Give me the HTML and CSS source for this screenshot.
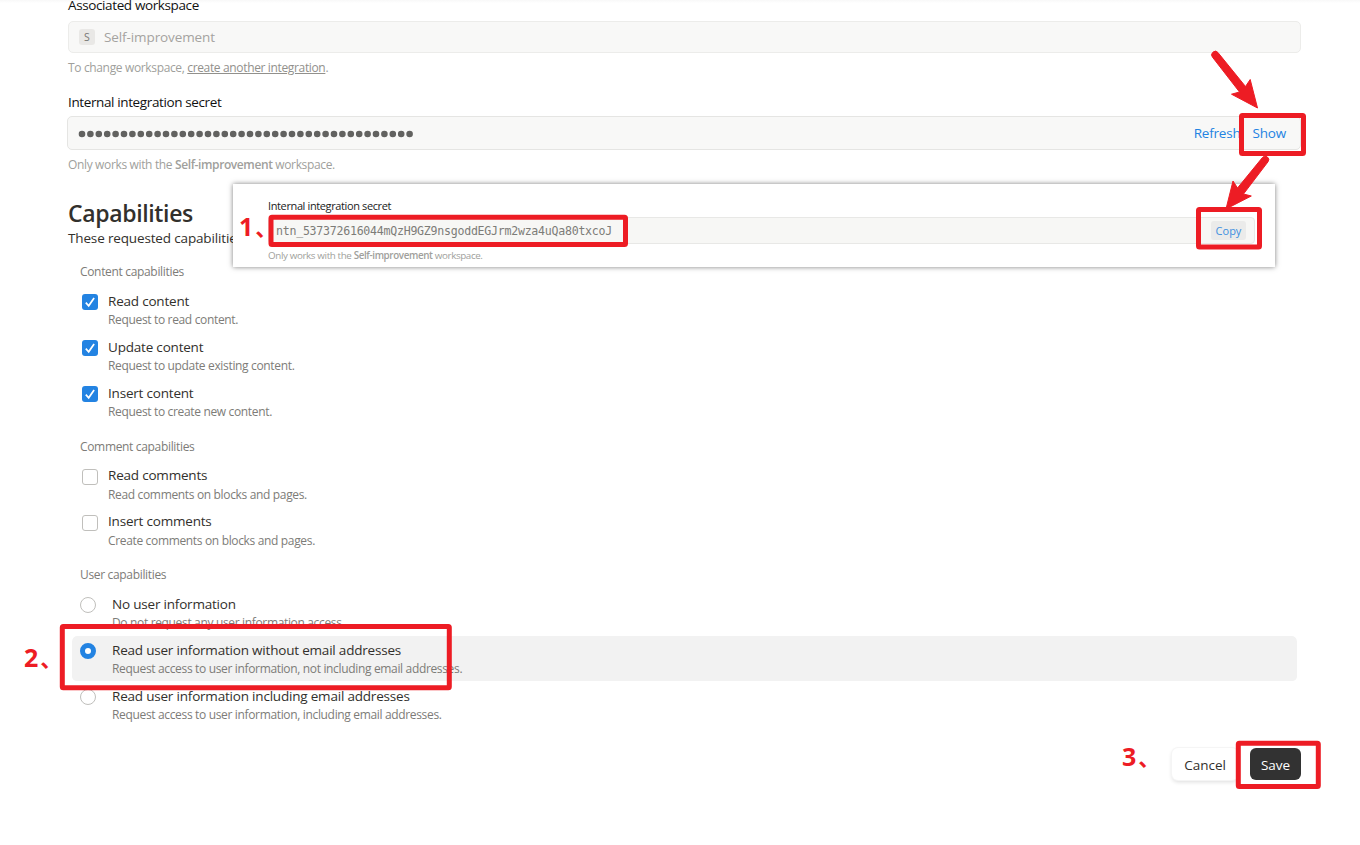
FILE: index.html
```
<!DOCTYPE html>
<html lang="en">
<head>
    <meta charset="utf-8">
    <title>Integration settings</title>
    <link rel="stylesheet" href="styles.css">
</head>
<body>
    <div class="container">
        <div class="label">Associated workspace</div>
        <div class="field workspace">
            <span class="avatar">S</span>
            <span class="workspace-name">Self-improvement</span>
        </div>
        <div class="hint hint-workspace">To change workspace, <a href="#">create another integration</a>.</div>

        <div class="label label-secret">Internal integration secret</div>
        <div class="field secret">
            <svg class="dots" width="336" height="8">
                <line x1="4" y1="4" x2="332" y2="4"/>
            </svg>
            <div class="secret-actions">
                <a class="refresh">Refresh</a>
                <a class="show">Show</a>
            </div>
        </div>
        <div class="hint hint-secret">Only works with the <b>Self-improvement</b> workspace.</div>

        <h2>Capabilities</h2>
        <p class="intro">These requested capabilitie</p>

        <div class="group">
            <div class="group-label label-content">Content capabilities</div>
            <div class="option">
                <span class="checkbox checked"><svg width="16" height="16" viewBox="0 0 16 16"><path d="M3.8 8.6L6.7 11.8L12.1 3.9"/></svg></span>
                <div class="option-text">
                    <div class="option-title">Read content</div>
                    <div class="option-desc">Request to read content.</div>
                </div>
            </div>
            <div class="option">
                <span class="checkbox checked"><svg width="16" height="16" viewBox="0 0 16 16"><path d="M3.8 8.6L6.7 11.8L12.1 3.9"/></svg></span>
                <div class="option-text">
                    <div class="option-title">Update content</div>
                    <div class="option-desc">Request to update existing content.</div>
                </div>
            </div>
            <div class="option">
                <span class="checkbox checked"><svg width="16" height="16" viewBox="0 0 16 16"><path d="M3.8 8.6L6.7 11.8L12.1 3.9"/></svg></span>
                <div class="option-text">
                    <div class="option-title">Insert content</div>
                    <div class="option-desc">Request to create new content.</div>
                </div>
            </div>
        </div>

        <div class="group comments">
            <div class="group-label">Comment capabilities</div>
            <div class="option">
                <span class="checkbox"></span>
                <div class="option-text">
                    <div class="option-title">Read comments</div>
                    <div class="option-desc">Read comments on blocks and pages.</div>
                </div>
            </div>
            <div class="option">
                <span class="checkbox"></span>
                <div class="option-text">
                    <div class="option-title">Insert comments</div>
                    <div class="option-desc">Create comments on blocks and pages.</div>
                </div>
            </div>
        </div>

        <div class="group users">
            <div class="group-label">User capabilities</div>
            <div class="option">
                <span class="radio"></span>
                <div class="option-text">
                    <div class="option-title">No user information</div>
                    <div class="option-desc">Do not request any user information access.</div>
                </div>
            </div>
            <div class="option selected">
                <span class="radio checked"></span>
                <div class="option-text">
                    <div class="option-title">Read user information without email addresses</div>
                    <div class="option-desc">Request access to user information, not including email addresses.</div>
                </div>
            </div>
            <div class="option">
                <span class="radio"></span>
                <div class="option-text">
                    <div class="option-title">Read user information including email addresses</div>
                    <div class="option-desc">Request access to user information, including email addresses.</div>
                </div>
            </div>
        </div>

        <div class="footer">
            <button class="button cancel">Cancel</button>
            <button class="button save">Save</button>
        </div>
    </div>

    <!-- revealed secret -->
    <div class="popup">
        <div class="popup-label">Internal integration secret</div>
        <div class="popup-field">
            <span class="token">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</span>
            <span class="copy">Copy</span>
        </div>
        <div class="popup-hint">Only works with the <b>Self-improvement</b> workspace.</div>
    </div>

    <!-- step marks -->
    <svg class="marks" width="1360" height="845">
        <rect x="1241.5" y="115.5" width="62" height="38" rx="1"/>
        <rect x="1198.5" y="209.5" width="61" height="37.5" rx="1"/>
        <rect x="271" y="217.2" width="354.5" height="27.3" rx="1"/>
        <rect x="62.3" y="626.5" width="387" height="61.3" rx="1"/>
        <rect x="1238.3" y="743.3" width="80" height="43.2" rx="1"/>
        <path class="arrow" d="M1212.5 57.2A3.5 3.5 0 0 1 1218 52.6L1245.5 86.5L1250.2 79.5L1257.5 108L1231.5 94.2L1239.5 92Z"/>
        <path class="arrow" d="M1268 161.8A3.5 3.5 0 0 0 1262.4 157.6L1237.5 188L1233 181L1226 209L1251.3 196L1243.5 194Z"/>
    </svg>
    <div class="step step-1">1<span>、</span></div>
    <div class="step step-2">2<span>、</span></div>
    <div class="step step-3">3<span>、</span></div>
</body>
</html>
```
FILE: styles.css
```
body {
    margin: 0;
    height: 845px;
    overflow: hidden;
    position: relative;
    background: linear-gradient(#f8f8f8, #fff 3px);
    font-family: "Open Sans", "Noto Sans", sans-serif;
    color: #32302c;
}

.container {
    width: 1233px;
    margin: -5px 0 0 68px;
    display: flow-root;
}

.label {
    font-size: 13.5px;
    line-height: 20px;
    letter-spacing: -0.38px;
    color: #111;
}

.field {
    display: flex;
    align-items: center;
    box-sizing: border-box;
    border: 1px solid #ececea;
    border-radius: 5px;
    background: #f8f8f7;
}

.workspace {
    height: 32px;
    margin-top: 6px;
    padding-left: 10px;
}

.avatar {
    width: 16px;
    height: 16px;
    border-radius: 3px;
    background: #e9e8e6;
    color: #787774;
    font-size: 10.5px;
    line-height: 16px;
    text-align: center;
    margin-right: 9px;
}

.workspace-name {
    font-size: 13.5px;
    letter-spacing: -0.1px;
    color: #a5a3a0;
}

.hint {
    font-size: 12px;
    line-height: 18px;
    letter-spacing: -0.35px;
    color: #a09f9c;
}

.hint a {
    color: #91908c;
}

.hint b {
    font-weight: 600;
    letter-spacing: -0.4px;
}

.hint-workspace {
    margin-top: 6px;
}

.label-secret {
    margin-top: 15px;
}

.secret {
    height: 34px;
    margin: 4px 0 0 -1px;
    padding-left: 10px;
    border-color: #e5e5e3;
    justify-content: space-between;
}

.dots {
    margin-top: 2px;
}

.dots line {
    stroke: #626260;
    stroke-width: 6.6;
    stroke-linecap: round;
    stroke-dasharray: 0 8.4;
}

.secret-actions {
    display: flex;
    gap: 12px;
    padding-right: 14px;
    font-size: 13.5px;
    letter-spacing: -0.2px;
    color: #2383e2;
}

.hint-secret {
    margin-top: 6px;
}

h2 {
    margin: 25px 0 1px;
    font-size: 23px;
    line-height: 28px;
    font-weight: 600;
    letter-spacing: -0.35px;
}

.intro {
    margin: 0;
    font-size: 13.5px;
    line-height: 20px;
    letter-spacing: -0.15px;
}

.group {
    margin: 15px 4px 0;
}

.comments {
    margin-top: 13px;
}

.users {
    margin-top: 12px;
}

.group-label {
    padding-left: 8px;
    margin-bottom: 6px;
    font-size: 12px;
    line-height: 18px;
    letter-spacing: -0.33px;
    color: #7d7c78;
}

.option {
    display: flex;
    height: 46px;
    padding-left: 10px;
    box-sizing: border-box;
    border-radius: 5px;
}

.users .option {
    padding-left: 8px;
}

.selected {
    background: #f2f2f2;
    background-clip: padding-box;
    border-bottom: 1px solid transparent;
}

.checkbox, .radio {
    box-sizing: border-box;
    width: 16px;
    height: 16px;
    margin-top: 7px;
    border: 1px solid #c0bfbc;
    border-radius: 3px;
    background: #fff;
}

.checkbox {
    margin-right: 10px;
}

.checkbox.checked {
    border: none;
    background: #2383e2;
}

.checkbox svg {
    display: block;
    fill: none;
    stroke: #fff;
    stroke-width: 1.7;
}

.radio {
    border-radius: 50%;
    margin-right: 16px;
}

.radio.checked {
    border: 5px solid #2383e2;
}

.option-text {
    padding-top: 4px;
}

.comments .option-text {
    padding-top: 3px;
}

.comments .option-desc {
    margin-top: 1px;
}

.option-title {
    font-size: 13.5px;
    line-height: 20px;
    letter-spacing: -0.2px;
}

.option-desc {
    font-size: 12px;
    line-height: 18px;
    letter-spacing: -0.34px;
    color: #7d7c78;
}

.footer {
    display: flex;
    justify-content: flex-end;
    gap: 12px;
    margin-top: 20px;
}

.button {
    box-sizing: border-box;
    height: 32px;
    padding: 1px 0 0;
    border: none;
    border-radius: 6px;
    font-family: inherit;
    font-size: 13.5px;
}

.cancel {
    width: 66px;
    background: #fff;
    color: #32302c;
    box-shadow: 0 0 0 1px #f5f5f5, 0 2px 4px rgba(0, 0, 0, 0.14);
}

.save {
    width: 51px;
    background: #323232;
    color: #fff;
}

.popup {
    position: absolute;
    left: 233px;
    top: 184px;
    width: 1042px;
    height: 83px;
    box-sizing: border-box;
    padding: 14px 20px 0 35px;
    background: #fff;
    box-shadow: 0 0 5px rgba(0, 0, 0, 0.5);
}

.popup-label {
    font-size: 11px;
    line-height: 16px;
    letter-spacing: -0.38px;
    color: #222;
}

.popup-field {
    display: flex;
    align-items: center;
    justify-content: space-between;
    box-sizing: border-box;
    height: 27px;
    margin-top: 3px;
    padding: 0 8px 0 7px;
    border: 1px solid #e8e8e6;
    border-radius: 4px;
    background: #f7f7f5;
}

.token {
    font-family: "DejaVu Sans Mono", monospace;
    font-size: 11.6px;
    letter-spacing: -0.26px;
    color: #7d7c78;
}

.copy {
    width: 35px;
    height: 19px;
    border-radius: 3px;
    background: #ebebea;
    color: #3d8fe0;
    font-size: 11px;
    line-height: 19px;
    text-align: center;
}

.popup-hint {
    margin-top: 4px;
    font-size: 9.8px;
    line-height: 15px;
    letter-spacing: -0.37px;
    color: #a09f9c;
}

.popup-hint b {
    font-weight: 600;
}

.marks {
    position: absolute;
    left: 0;
    top: 0;
}

.marks rect {
    fill: none;
    stroke: #ed1c24;
    stroke-width: 5;
}

.marks .arrow {
    fill: #ed1c24;
    stroke: #ed1c24;
    stroke-width: 1;
}

.step {
    position: absolute;
    color: #ed1c24;
    font-size: 25px;
    line-height: 30px;
    font-weight: 700;
    white-space: nowrap;
}

.step span {
    margin-left: 2px;
    font-family: "Noto Sans CJK SC", sans-serif;
    font-size: 22px;
}

.step-1 {
    left: 239px;
    top: 211px;
}

.step-2 {
    left: 24px;
    top: 642px;
}

.step-3 {
    left: 1122px;
    top: 741px;
}
```
